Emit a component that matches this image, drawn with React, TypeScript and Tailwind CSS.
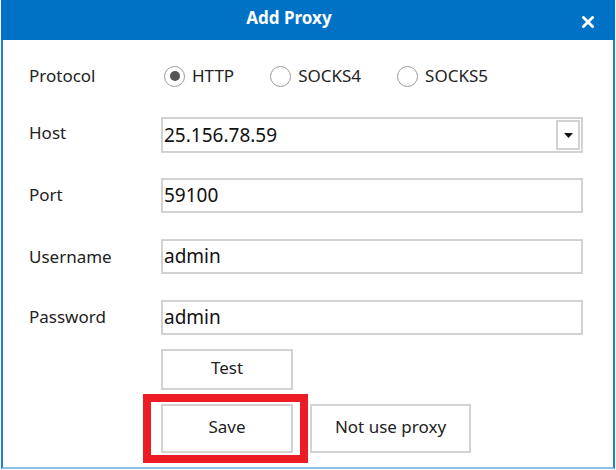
import React from "react";

const font = { fontFamily: '"Noto Sans", "Open Sans", sans-serif' };

function Radio({ checked, label }: { checked?: boolean; label: string }) {
  return (
    <div className="flex items-center">
      <div className="w-[21px] h-[21px] rounded-full border border-[#9a9a9a] bg-white flex items-center justify-center">
        {checked && <div className="w-[10px] h-[10px] rounded-full bg-[#555555]" />}
      </div>
      <span className="ml-[7px] text-[17px] text-[#222]">{label}</span>
    </div>
  );
}

function Field({ value }: { value: string }) {
  return (
    <div className="w-[422px] h-[35px] border-2 border-[#d2d2d2] bg-white flex items-center pl-[1px] text-[19px] text-[#111]">
      {value}
    </div>
  );
}

export default function App() {
  return (
    <div className="w-[616px] h-[470px] bg-white relative overflow-hidden" style={font}>
      <div className="ml-[1px] w-[614px] h-[469px] border-x-2 border-x-[#1b80d4] border-b-2 border-b-[#8ec0e8] flex flex-col">
        <div className="h-[40px] bg-[#0072c6] -mx-[2px] flex items-center justify-center relative shrink-0 pr-[38px]">
          <span className="text-white font-bold text-[17px] -mt-[5px]">Add Proxy</span>
          <svg className="absolute right-[21px] top-[16px]" width="12" height="12" viewBox="0 0 12 12">
            <path d="M1.5 1.5 L10.5 10.5 M10.5 1.5 L1.5 10.5" stroke="white" strokeWidth="2.8" strokeLinecap="square" />
          </svg>
        </div>
        <div className="pl-[26px] flex flex-col text-[17px] text-[#222]">
          <div className="mt-[18px] h-[36px] flex items-center">
            <div className="w-[132px]">Protocol</div>
            <div className="flex items-center ml-[3px]">
              <Radio checked label="HTTP" />
              <div className="ml-[36px]"><Radio label="SOCKS4" /></div>
              <div className="ml-[36px]"><Radio label="SOCKS5" /></div>
            </div>
          </div>
          <div className="mt-[23px] h-[36px] flex items-center">
            <div className="w-[132px] -mt-[4px]">Host</div>
            <div className="w-[422px] h-[36px] border-2 border-[#d2d2d2] bg-white flex items-center pl-[1px] text-[19px] text-[#111] relative">
              <span>25.156.78.59</span>
              <div className="absolute right-[1px] top-[1px] bottom-[1px] w-[24px] border-2 border-[#d2d2d2] flex items-center justify-center">
                <svg width="9" height="5" viewBox="0 0 9 5"><path d="M0 0 H9 L4.5 5 Z" fill="#111" /></svg>
              </div>
            </div>
          </div>
          <div className="mt-[25px] flex items-center">
            <div className="w-[132px] -mt-[2px]">Port</div>
            <Field value="59100" />
          </div>
          <div className="mt-[26px] flex items-center">
            <div className="w-[132px]">Username</div>
            <Field value="admin" />
          </div>
          <div className="mt-[26px] flex items-center">
            <div className="w-[132px] -mt-[1px]">Password</div>
            <Field value="admin" />
          </div>
          <div className="mt-[14px] ml-[132px] w-[132px] h-[41px] border-2 border-[#d2d2d2] flex items-center justify-center text-[17px]">
            <span className="-mt-[3px]">Test</span>
          </div>
          <div className="mt-[14px] ml-[132px] flex">
            <div className="relative">
              <div className="w-[132px] h-[49px] border-2 border-[#d2d2d2] flex items-center justify-center">
                <span className="-mt-[3px]">Save</span>
              </div>
              <div className="absolute -left-[18px] -right-[15px] -top-[10px] -bottom-[10px] border-[8px] border-[#ed1c24]" />
            </div>
            <div className="ml-[17px] w-[161px] h-[49px] border-2 border-[#d2d2d2] flex items-center justify-center">
              <span className="-mt-[3px]">Not use proxy</span>
            </div>
          </div>
        </div>
      </div>
    </div>
  );
}
